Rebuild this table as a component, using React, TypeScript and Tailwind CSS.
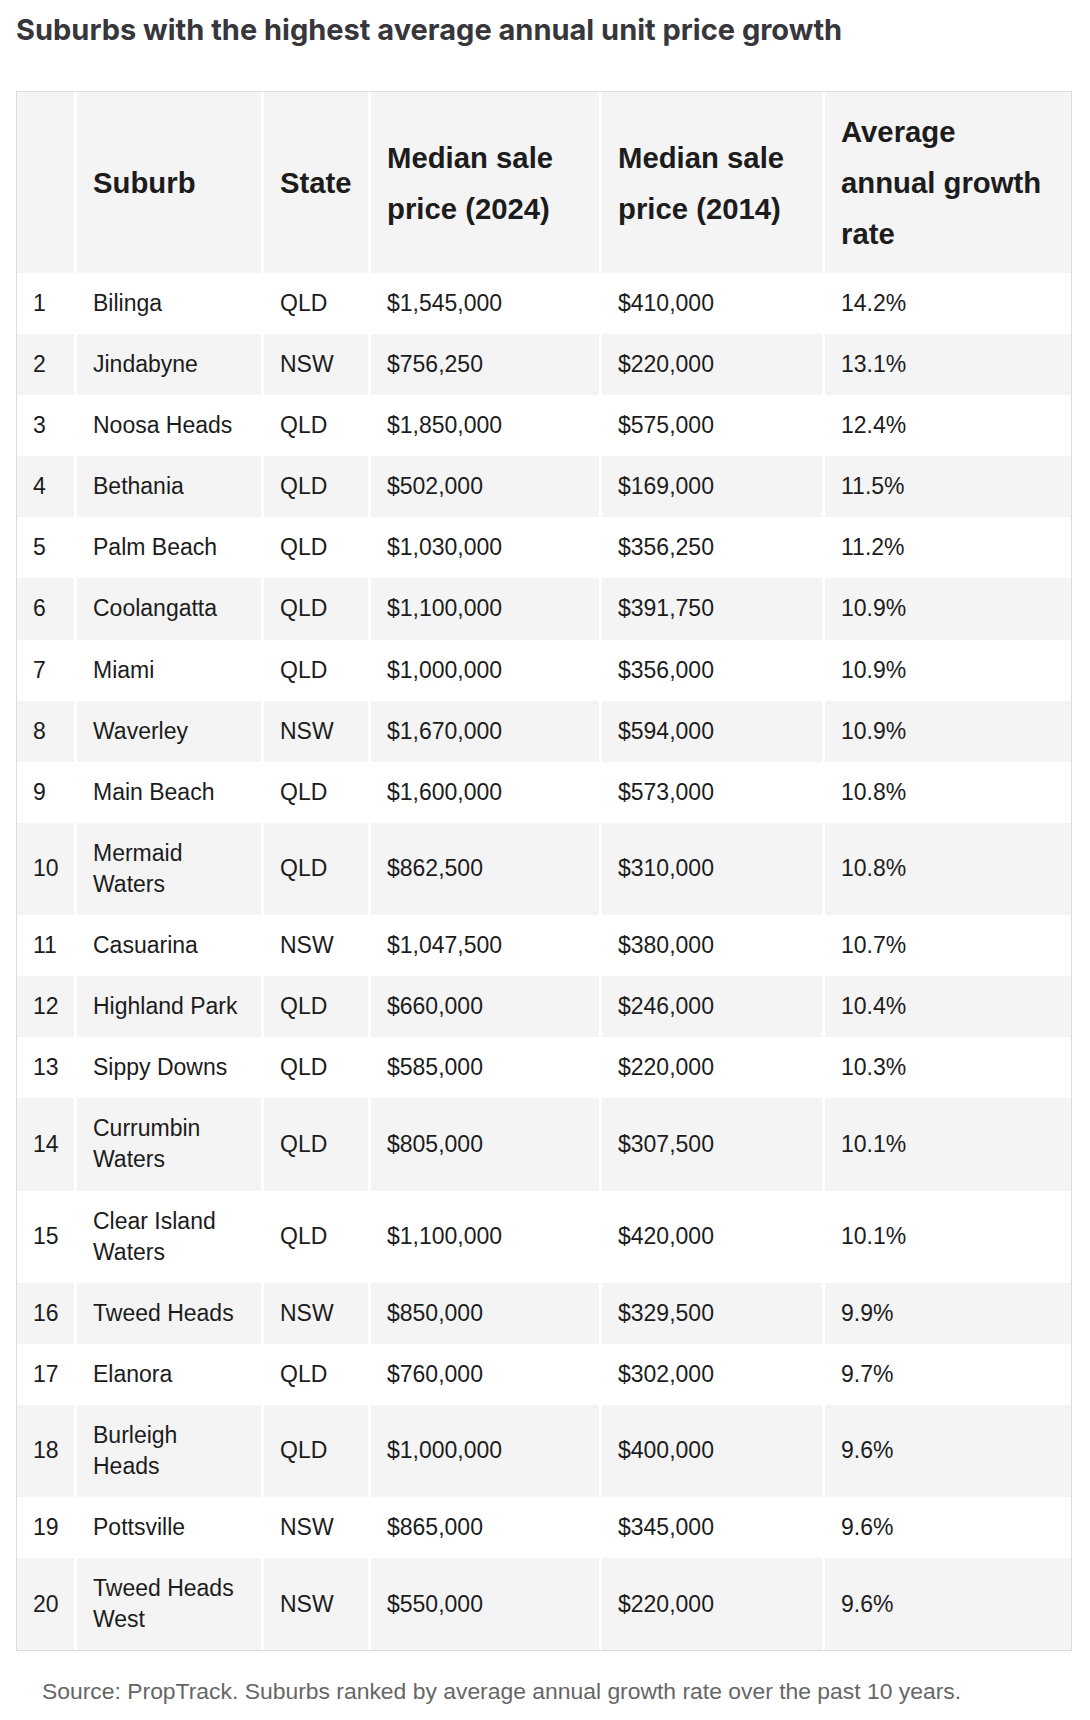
const rows: [string, string, string, string, string][] = [
  ['Bilinga', 'QLD', '$1,545,000', '$410,000', '14.2%'],
  ['Jindabyne', 'NSW', '$756,250', '$220,000', '13.1%'],
  ['Noosa Heads', 'QLD', '$1,850,000', '$575,000', '12.4%'],
  ['Bethania', 'QLD', '$502,000', '$169,000', '11.5%'],
  ['Palm Beach', 'QLD', '$1,030,000', '$356,250', '11.2%'],
  ['Coolangatta', 'QLD', '$1,100,000', '$391,750', '10.9%'],
  ['Miami', 'QLD', '$1,000,000', '$356,000', '10.9%'],
  ['Waverley', 'NSW', '$1,670,000', '$594,000', '10.9%'],
  ['Main Beach', 'QLD', '$1,600,000', '$573,000', '10.8%'],
  ['Mermaid Waters', 'QLD', '$862,500', '$310,000', '10.8%'],
  ['Casuarina', 'NSW', '$1,047,500', '$380,000', '10.7%'],
  ['Highland Park', 'QLD', '$660,000', '$246,000', '10.4%'],
  ['Sippy Downs', 'QLD', '$585,000', '$220,000', '10.3%'],
  ['Currumbin Waters', 'QLD', '$805,000', '$307,500', '10.1%'],
  ['Clear Island Waters', 'QLD', '$1,100,000', '$420,000', '10.1%'],
  ['Tweed Heads', 'NSW', '$850,000', '$329,500', '9.9%'],
  ['Elanora', 'QLD', '$760,000', '$302,000', '9.7%'],
  ['Burleigh Heads', 'QLD', '$1,000,000', '$400,000', '9.6%'],
  ['Pottsville', 'NSW', '$865,000', '$345,000', '9.6%'],
  ['Tweed Heads West', 'NSW', '$550,000', '$220,000', '9.6%'],
]

const th = 'border-l-[3px] border-white first:border-l-0 px-4 py-[14px] text-left align-middle font-bold text-[29.3px] leading-[51px] text-[#1c1c1c]'
const td = 'border-l-[3px] border-white first:border-l-0 px-4 py-[15px] align-middle text-[23px] leading-[31.1px] text-[#1c1c1c]'

export default function App() {
  return (
    <div className="min-h-[1720px] bg-white px-4 pt-3 font-['Liberation_Sans',Arial,sans-serif]">
      {/* Titulo */}
      <h2 className="font-['Inter',sans-serif] text-[29px] font-bold leading-[35px] tracking-normal text-[#36363b]">
        Suburbs with the highest average annual unit price growth
      </h2>

      {/* Tabela */}
      <table className="mt-[44px] w-[1056px] table-fixed border-separate border-spacing-0 border border-[#dcdcdc]">
        <colgroup>
          <col className="w-[57px]" />
          <col className="w-[187px]" />
          <col className="w-[107px]" />
          <col className="w-[231px]" />
          <col className="w-[223px]" />
          <col className="w-[249px]" />
        </colgroup>
        <thead>
          <tr className="bg-[#f4f4f4]">
            <th className={th}></th>
            <th className={th}>Suburb</th>
            <th className={th}>State</th>
            <th className={th}>Median sale<br />price (2024)</th>
            <th className={th}>Median sale<br />price (2014)</th>
            <th className={th}>Average<br />annual growth<br />rate</th>
          </tr>
        </thead>
        <tbody>
          {rows.map((r, i) => (
            <tr key={i} className={i % 2 === 1 ? 'bg-[#f4f4f4]' : 'bg-white'}>
              <td className={td}>{i + 1}</td>
              <td className={td}>{r[0]}</td>
              <td className={td}>{r[1]}</td>
              <td className={td}>{r[2]}</td>
              <td className={td}>{r[3]}</td>
              <td className={td}>{r[4]}</td>
            </tr>
          ))}
        </tbody>
      </table>

      {/* Fonte */}
      <p className="mt-[25px] pl-[26px] text-[22.9px] leading-[31px] text-[#666]">
        Source: PropTrack. Suburbs ranked by average annual growth rate over the past 10 years.
      </p>
    </div>
  )
}
